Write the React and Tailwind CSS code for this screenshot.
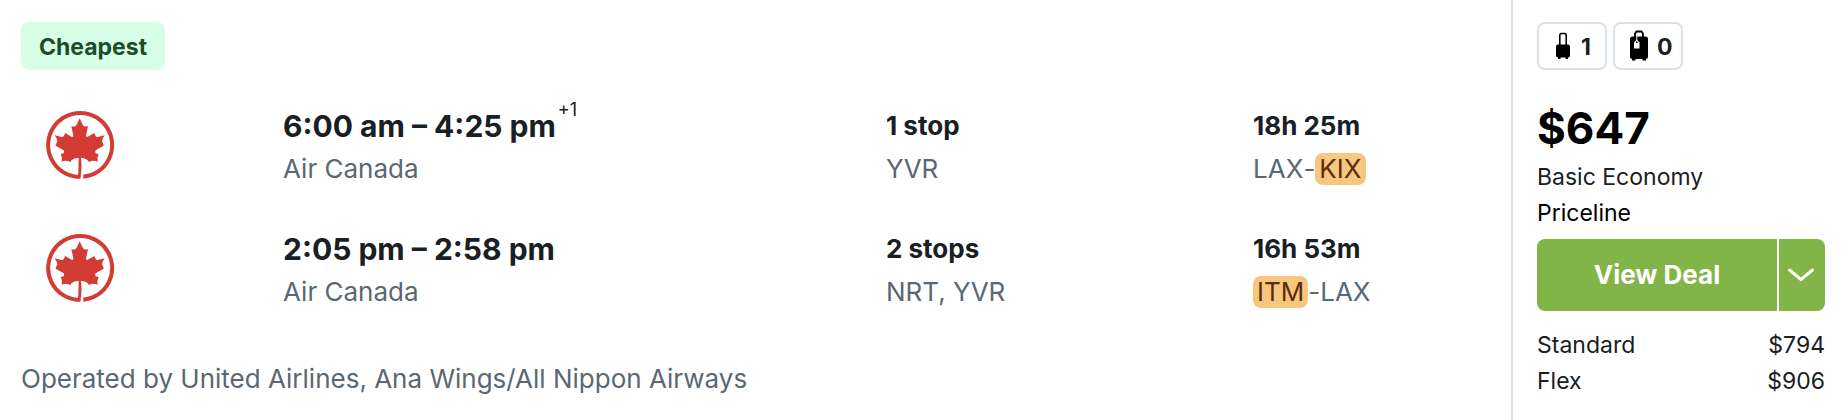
import React from "react";
import { clsx } from "clsx";

const legs = [
  {
    id: "outbound",
    times: "6:00 am – 4:25 pm",
    dayOffset: "+1",
    airline: "Air Canada",
    stops: "1 stop",
    via: "YVR",
    duration: "18h 25m",
    from: { code: "LAX" },
    to: { code: "KIX", highlight: true },
  },
  {
    id: "return",
    times: "2:05 pm – 2:58 pm",
    airline: "Air Canada",
    stops: "2 stops",
    via: "NRT, YVR",
    duration: "16h 53m",
    from: { code: "ITM", highlight: true },
    to: { code: "LAX" },
  },
];

const fares = [
  { name: "Standard", price: "$794" },
  { name: "Flex", price: "$906" },
];

const MapleLeafLogo = () => (
  <svg viewBox="18 16 210 210" className="size-[70px]" role="img" aria-label="Air Canada">
    <path
      d="M133 216.500A96 96 0 1 0 114 216.500"
      fill="none"
      stroke="#d33b35"
      strokeWidth="12"
    />
    <path
      d="M122 41L131 60Q137 69 147 64L141 93Q141 98 146 96L166 85Q170 99 176 97L197 92Q187 107 190 113Q194 119 194 123L170 137Q167 141 170 146L179 148Q174 158 176 171Q163 166 154 170Q149 175 147 167Q138 159 126 159Q129 190 126 205Q125 214 125 221L120 223L110 221L110 212Q117 214 118 204L119 159Q106 159 97 167Q95 175 90 170Q81 166 68 171Q70 158 65 148L74 146Q77 141 74 137L50 123Q50 119 54 113Q57 107 47 92L68 97Q74 99 78 85L98 96Q103 98 103 93L97 64Q107 69 113 60Z"
      fill="#d33b35"
    />
  </svg>
);

const CarryOnIcon = () => (
  <svg viewBox="-2 0 20 28" className="h-7 w-5">
    <path d="M4.800 13V3.200Q4.800 1.500 6.500 1.500H9.500Q11.200 1.500 11.200 3.200V13" fill="none" stroke="#000" strokeWidth="1.600" />
    <rect x="1" y="12.500" width="14" height="13" rx="2" />
    <path d="M3 25H5.500V27H3ZM10.500 25H13V27H10.500Z" />
  </svg>
);

const CheckedBagIcon = () => (
  <svg viewBox="0 1 20 32" className="h-8 w-5">
    <path d="M6 8V4.500L7.500 2.500H12.500L14 4.500V8" fill="none" stroke="#000" strokeWidth="1.800" />
    <rect x="1" y="7.500" width="18" height="22.500" rx="2.500" />
    <path d="M3 29H6.500V31.500H3ZM13.500 29H17V31.500H13.500Z" />
    <path d="M7.800 6.500V11" stroke="#fff" strokeWidth="1" />
    <path d="M5 13.500L7.800 10.500L10.500 13.500V19.500H5Z" fill="#fff" />
    <circle cx="7.800" cy="13.200" r="0.900" />
  </svg>
);

const Airport = ({ code, highlight }) => (
  <span className={clsx(highlight && "rounded-lg bg-[#f7c77f] px-1 text-[#5c2d0e]")}>
    {code}
  </span>
);

const BagCount = ({ icon, count, label }) => (
  <div
    aria-label={label}
    className="flex h-12 w-[70px] items-center gap-2 rounded-lg border-2 border-[#d9e2e8] pl-[14px] font-bold"
  >
    {icon}
    <span className="pt-[2px]">{count}</span>
  </div>
);

const FlightLeg = ({ leg }) => (
  <li className="grid grid-cols-[262fr_603fr_367fr_237fr] text-[26px] leading-8">
    <div className="pt-1 pl-6">
      <MapleLeafLogo />
    </div>
    <div>
      <div className="flex h-[47px] text-[30px] leading-10 font-bold">
        {leg.times}
        {leg.dayOffset && (
          <sup className="top-0 pl-[2px] text-lg leading-2 font-normal">{leg.dayOffset}</sup>
        )}
      </div>
      <div className="text-[#5a6872]">{leg.airline}</div>
    </div>
    <div>
      <div className="h-[47px] leading-10 font-bold">{leg.stops}</div>
      <div className="text-[#5a6872]">{leg.via}</div>
    </div>
    <div>
      <div className="h-[47px] leading-10 font-bold">{leg.duration}</div>
      <div className="flex text-[#5a6872]">
        <Airport {...leg.from} />-<Airport {...leg.to} />
      </div>
    </div>
  </li>
);

const App = () => {
  return (
    <article className="flex min-h-screen bg-white font-['Inter',sans-serif] text-[#192024]">
      <section className="flex-1 px-[21px] pt-[22px] pb-4">
        <div className="flex h-12 w-fit items-center rounded-lg bg-[#d7ffe7] px-[18px] pt-[2px] text-[23px] font-bold text-[#1c4d26]">
          Cheapest
        </div>

        <ul className="mt-9 flex flex-col gap-11">
          {legs.map((leg) => (
            <FlightLeg key={leg.id} leg={leg} />
          ))}
        </ul>

        <p className="mt-[55px] text-[26px] leading-8 text-[#5a6872]">
          Operated by United Airlines, Ana Wings/All Nippon Airways
        </p>
      </section>

      <aside className="w-[337px] shrink-0 border-l-2 border-[#d9e2e8] pt-[22px] pr-[23px] pl-6 text-[23px] leading-9">
        <div className="flex gap-[6px]">
          <BagCount icon={<CarryOnIcon />} count={1} label="Carry-on bags" />
          <BagCount icon={<CheckedBagIcon />} count={0} label="Checked bags" />
        </div>

        <div className="mt-8 text-[44px] leading-[52px] font-bold text-black">$647</div>
        <div className="mt-[5px]">Basic Economy</div>
        <div className="text-black">Priceline</div>

        <div className="mt-2 flex h-[72px] gap-[2px] text-white">
          <button className="flex-1 rounded-l-lg bg-[#82b548] text-[26px] font-bold">
            View Deal
          </button>
          <button
            aria-label="More deals"
            className="flex w-[46px] items-center justify-center rounded-r-lg bg-[#82b548] pr-[2px]"
          >
            <svg viewBox="0 0 26 14" className="h-[14px] w-[26px]">
              <path d="M1.500 2L13 11.500L24.500 2" fill="none" stroke="currentColor" strokeWidth="3" strokeLinecap="round" />
            </svg>
          </button>
        </div>

        <ul className="mt-4">
          {fares.map((fare) => (
            <li key={fare.name} className="flex justify-between">
              <span>{fare.name}</span>
              <span>{fare.price}</span>
            </li>
          ))}
        </ul>
      </aside>
    </article>
  );
};

export default App;
